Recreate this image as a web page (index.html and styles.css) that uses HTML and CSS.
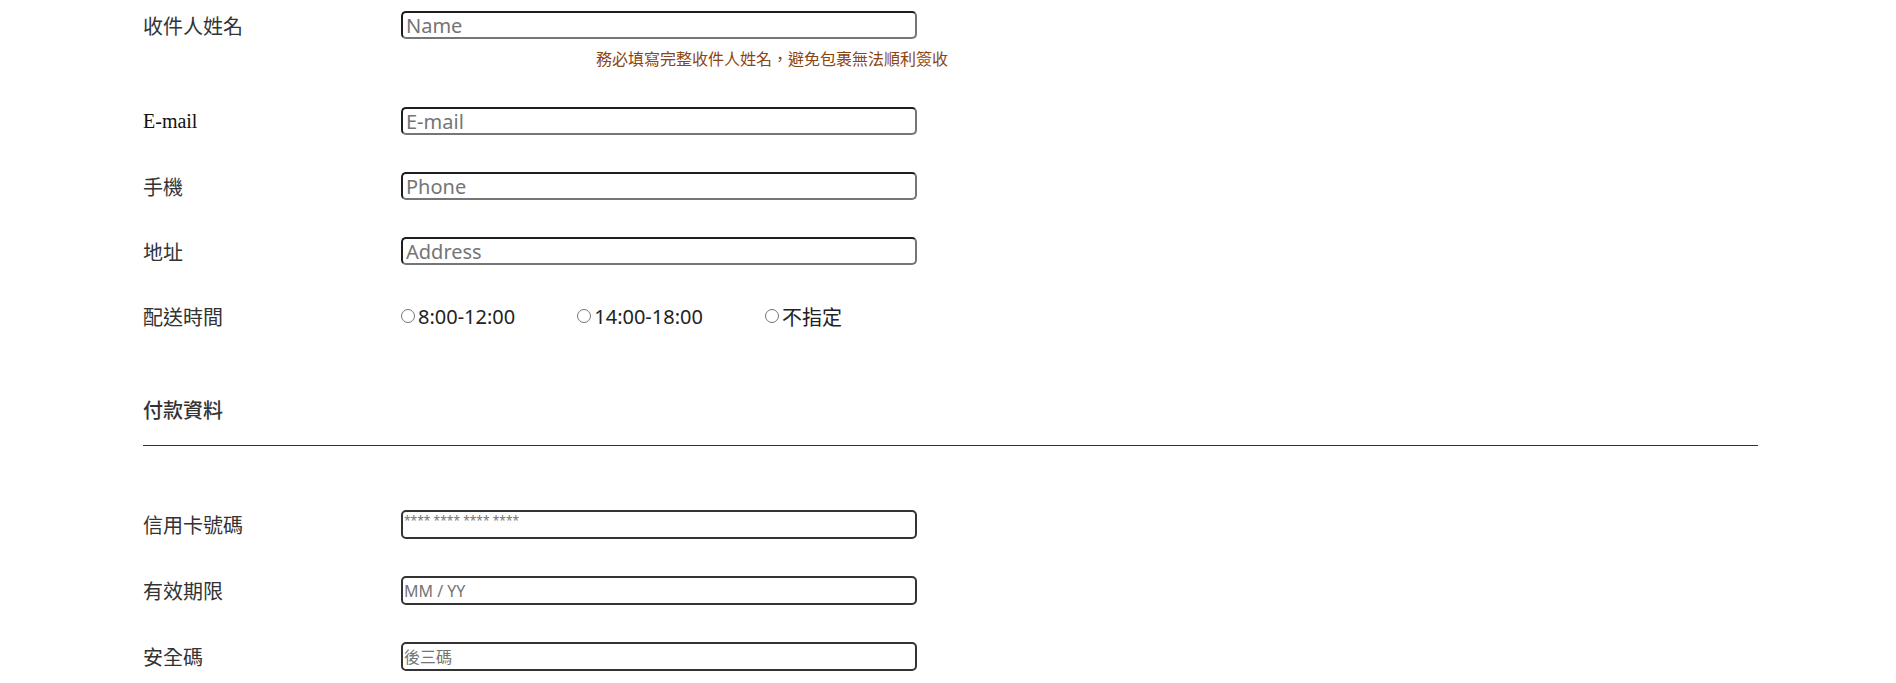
FILE: index.html
```html
<!DOCTYPE html>
<html lang="zh-Hant">
<head>
  <meta charset="UTF-8">
  <meta name="viewport" content="width=device-width, initial-scale=1.0">
  <title>訂購資料</title>
  <link rel="stylesheet" href="styles.css">
</head>
<body>
  <form class="order">
    <div class="field field-name">
      <label class="label" for="name">收件人姓名</label>
      <input class="text-input" id="name" type="text" placeholder="Name">
    </div>
    <p class="hint">務必填寫完整收件人姓名，避免包裹無法順利簽收</p>

    <div class="field">
      <label class="label label-serif" for="email">E-mail</label>
      <input class="text-input" id="email" type="email" placeholder="E-mail">
    </div>

    <div class="field">
      <label class="label" for="phone">手機</label>
      <input class="text-input" id="phone" type="tel" placeholder="Phone">
    </div>

    <div class="field">
      <label class="label" for="address">地址</label>
      <input class="text-input" id="address" type="text" placeholder="Address">
    </div>

    <div class="field field-last">
      <span class="label">配送時間</span>
      <div class="radios">
        <label class="radio"><input type="radio" name="time">8:00-12:00</label>
        <label class="radio"><input type="radio" name="time">14:00-18:00</label>
        <label class="radio"><input type="radio" name="time">不指定</label>
      </div>
    </div>

    <h3 class="section-title">付款資料</h3>
    <hr class="divider">

    <div class="field field-pay">
      <label class="label" for="card">信用卡號碼</label>
      <input class="text-input pay-input card-input" id="card" type="text" placeholder="**** **** **** ****">
    </div>

    <div class="field field-pay">
      <label class="label" for="expiry">有效期限</label>
      <input class="text-input pay-input" id="expiry" type="text" placeholder="MM / YY">
    </div>

    <div class="field field-pay">
      <label class="label" for="cvc">安全碼</label>
      <input class="text-input pay-input" id="cvc" type="text" placeholder="後三碼">
    </div>
  </form>
</body>
</html>
```

FILE: styles.css
```css
* {
  box-sizing: border-box;
}
body {
  margin: 0;
  background: #fff;
  font-family: "Noto Sans", "Noto Sans CJK TC", sans-serif;
  color: #333;
}
.order {
  padding: 11px 138px 0 143px;
}
.field {
  display: flex;
  align-items: center;
  height: 28px;
  margin-bottom: 37px;
}
.field-name {
  margin-bottom: 0;
}
.field-last {
  margin-bottom: 67px;
}
.label {
  width: 258px;
  flex-shrink: 0;
  font-size: 20px;
  color: #333;
}
.label-serif {
  font-family: "Liberation Serif", serif;
  color: #111;
}
.text-input {
  width: 516px;
  height: 28px;
  padding: 0 3px;
  font-family: "Noto Sans", "Noto Sans CJK TC", sans-serif;
  font-size: 20px;
  border: 2px solid;
  border-color: #1e1e1e #767676 #767676 #1e1e1e;
  border-radius: 5px;
  outline: none;
}
.text-input::placeholder {
  color: #757575;
}
.hint {
  margin: 10px 0 38px 453px;
  font-size: 16px;
  line-height: 20px;
  color: #8b4513;
}
.radios {
  display: flex;
  gap: 62px;
}
.radio {
  display: flex;
  align-items: center;
  font-size: 20px;
  color: #222;
}
.radio input {
  appearance: none;
  width: 14px;
  height: 14px;
  margin: 0 3px 0 0;
  border: 1px solid #767676;
  border-radius: 50%;
  background: #fff;
}
.section-title {
  margin: 0;
  font-size: 20px;
  line-height: 28px;
  font-weight: 500;
  color: #333;
}
.divider {
  margin: 20px 0 64px;
  border: none;
  border-top: 1px solid #333;
}
.field-pay {
  height: 29px;
}
.pay-input {
  height: 29px;
  font-size: 16px;
  padding: 0 1px;
  border-color: #333;
}
.card-input {
  font-size: 12px;
  padding: 1px 1px 9px;
}
```
